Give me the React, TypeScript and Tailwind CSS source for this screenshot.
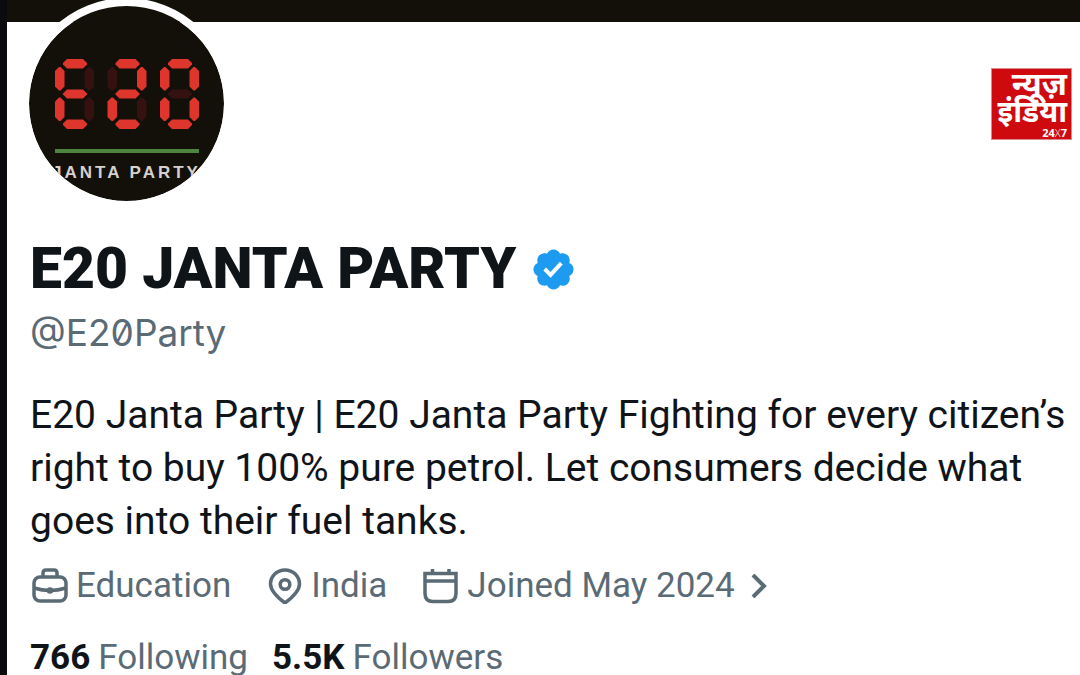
const SEGMENTS = [
  "M12 0h16l4 4v1.500l-4 4h-16l-4-4v-1.500z",
  "M33.500 8h1.500l4 4v15.500l-4 4h-1.500l-4-4v-15.500z",
  "M33.500 38.500h1.500l4 4v15.500l-4 4h-1.500l-4-4v-15.500z",
  "M12 60.500h16l4 4v1.500l-4 4h-16l-4-4v-1.500z",
  "M4 38.500h1.500l4 4v15.500l-4 4h-1.500l-4-4v-15.500z",
  "M4 8h1.500l4 4v15.500l-4 4h-1.500l-4-4v-15.500z",
  "M12 30.500h16l4 4v1l-4 4h-16l-4-4v-1z",
];

// lit segments, clockwise from the top, middle bar last
const DIGITS = [
  { name: "E", lit: [0, 3, 4, 5, 6] },
  { name: "2", lit: [0, 1, 3, 4, 6] },
  { name: "0", lit: [0, 1, 2, 3, 4, 5] },
];

function Avatar() {
  return (
    <div className="relative -mt-6 ml-3.5 flex size-[211px] flex-col items-center overflow-hidden rounded-full border-8 border-white bg-[#13100a] bg-clip-padding pt-[53px]">
      <svg width="144" height="70" viewBox="0 0 144 70" aria-label="E20">
        {DIGITS.map((digit, i) => (
          <g key={digit.name} transform={`translate(${i * 52.500} 0)`}>
            {SEGMENTS.map((d, n) => (
              <path
                key={n}
                d={d}
                fill={digit.lit.includes(n) ? "#de352c" : "#351110"}
              />
            ))}
          </g>
        ))}
      </svg>
      <div className="mt-5 h-1 w-36 bg-[#4c853f]" />
      <span className="mt-2 font-['Liberation_Sans'] text-[17px] leading-6 font-bold tracking-[3px] whitespace-nowrap text-[#d6d1cc]">
        JANTA PARTY
      </span>
    </div>
  );
}

function ChannelLogo() {
  return (
    <div className="absolute top-[68px] right-2 flex h-[72px] w-[81px] flex-col items-end border border-[#d98a8a] bg-[#cf0a0f] pt-1 pr-1 font-['Noto_Sans_Devanagari','Noto_Sans',sans-serif] font-bold text-white">
      <span className="text-[32px] leading-7">न्यूज़</span>
      <span className="text-[30px] leading-7">इंडिया</span>
      <span className="font-['Open_Sans'] text-[11px] leading-2">
        24<span className="font-light">X</span>7
      </span>
    </div>
  );
}

function VerifiedBadge() {
  return (
    <svg className="size-[47px]" viewBox="0 0 22 22" aria-label="Verified account">
      <path
        fill="#1d9bf0"
        d="M20.396 11c-.018-.646-.215-1.275-.57-1.816-.354-.54-.852-.972-1.438-1.246.223-.607.27-1.264.14-1.897-.131-.634-.437-1.218-.882-1.687-.47-.445-1.053-.75-1.687-.882-.633-.13-1.29-.083-1.897.14-.273-.587-.704-1.086-1.245-1.44S11.647 1.62 11 1.604c-.646.017-1.273.213-1.813.568s-.969.854-1.24 1.44c-.608-.223-1.267-.272-1.902-.14-.635.13-1.22.436-1.69.882-.445.47-.749 1.055-.878 1.688-.13.633-.08 1.29.144 1.896-.587.274-1.087.705-1.443 1.245-.356.54-.555 1.17-.574 1.817.02.647.218 1.276.574 1.817.356.54.856.972 1.443 1.245-.224.606-.274 1.263-.144 1.896.13.634.433 1.218.877 1.688.47.443 1.054.747 1.687.878.633.132 1.29.084 1.897-.136.274.586.705 1.084 1.246 1.439.54.354 1.17.551 1.816.569.647-.016 1.276-.213 1.817-.567s.972-.854 1.245-1.44c.604.239 1.266.296 1.903.164.636-.132 1.22-.447 1.68-.907.46-.46.776-1.044.908-1.681s.075-1.299-.165-1.903c.586-.274 1.084-.705 1.439-1.246.354-.54.551-1.17.569-1.816zM9.662 14.85l-3.429-3.428 1.293-1.302 2.072 2.072 4.400-4.794 1.347 1.246z"
      />
    </svg>
  );
}

const iconProps = {
  className: "size-9",
  viewBox: "0 0 36 36",
  fill: "none",
  stroke: "currentColor",
  strokeWidth: 3.5,
  "aria-hidden": true,
};

function BriefcaseIcon() {
  return (
    <svg {...iconProps}>
      <rect x="2" y="9" width="32" height="24" rx="6" />
      <path d="M11 9V5q0-3 3-3h8q3 0 3 3v4" />
      <path d="M2 20q16 5 32 0" />
      <circle cx="18" cy="22.500" r="1.500" />
    </svg>
  );
}

function PinIcon() {
  return (
    <svg {...iconProps}>
      <path d="M18 35C10 29 3.500 23 3.500 16a14.500 14 0 0 1 29 0C32.500 23 26 29 18 35z" />
      <circle cx="18" cy="16.500" r="4.800" />
    </svg>
  );
}

function CalendarIcon() {
  return (
    <svg {...iconProps}>
      <path d="M2 5.500h31v20q0 8-8 8H10q-8 0-8-8z" />
      <path d="M2 13h31M9.500 1v5M26 1v5" />
    </svg>
  );
}

export default function App() {
  return (
    <div className="flex min-h-screen bg-white font-['Roboto',sans-serif] text-[#0f1419]">
      <div className="w-[7px] shrink-0 bg-[#0b0b0f]" />
      <main className="relative min-w-0 flex-1">
        <div className="h-[22px] bg-[#13100a]" />
        <Avatar />
        <ChannelLogo />

        <div className="pt-7 pr-3 pl-[23px]">
          <h1 className="flex items-center gap-3.5 text-[57px] leading-16 font-black">
            E20 JANTA PARTY
            <VerifiedBadge />
          </h1>
          <p className="font-['Inter'] text-[37px] leading-16 text-[#5b6b76] slashed-zero">
            @E20Party
          </p>

          <p className="mt-6 text-[39px] leading-[53px]">
            E20 Janta Party | E20 Janta Party Fighting for every citizen’s right
            to buy 100% pure petrol. Let consumers decide what goes into their
            fuel tanks.
          </p>

          <ul className="mt-3.5 flex gap-9 pl-0.5 text-[35px] leading-12 text-[#5b6b76]">
            <li className="flex items-center gap-2">
              <BriefcaseIcon />
              Education
            </li>
            <li className="flex items-center gap-2">
              <PinIcon />
              India
            </li>
            <li>
              <a href="#about" className="flex items-center gap-2">
                <CalendarIcon />
                Joined May 2024
                <svg
                  className="ml-2 h-6 w-4"
                  viewBox="0 0 16 24"
                  fill="none"
                  stroke="currentColor"
                  strokeWidth="4"
                  aria-hidden
                >
                  <path d="M2 1l11 11L2 23" />
                </svg>
              </a>
            </li>
          </ul>

          <div className="mt-6 flex gap-6 text-[35px] leading-12">
            <a href="#following" className="flex gap-2">
              <b>766</b>
              <span className="text-[#5b6b76]">Following</span>
            </a>
            <a href="#followers" className="flex gap-2">
              <b>5.5K</b>
              <span className="text-[#5b6b76]">Followers</span>
            </a>
          </div>
        </div>
      </main>
    </div>
  );
}
